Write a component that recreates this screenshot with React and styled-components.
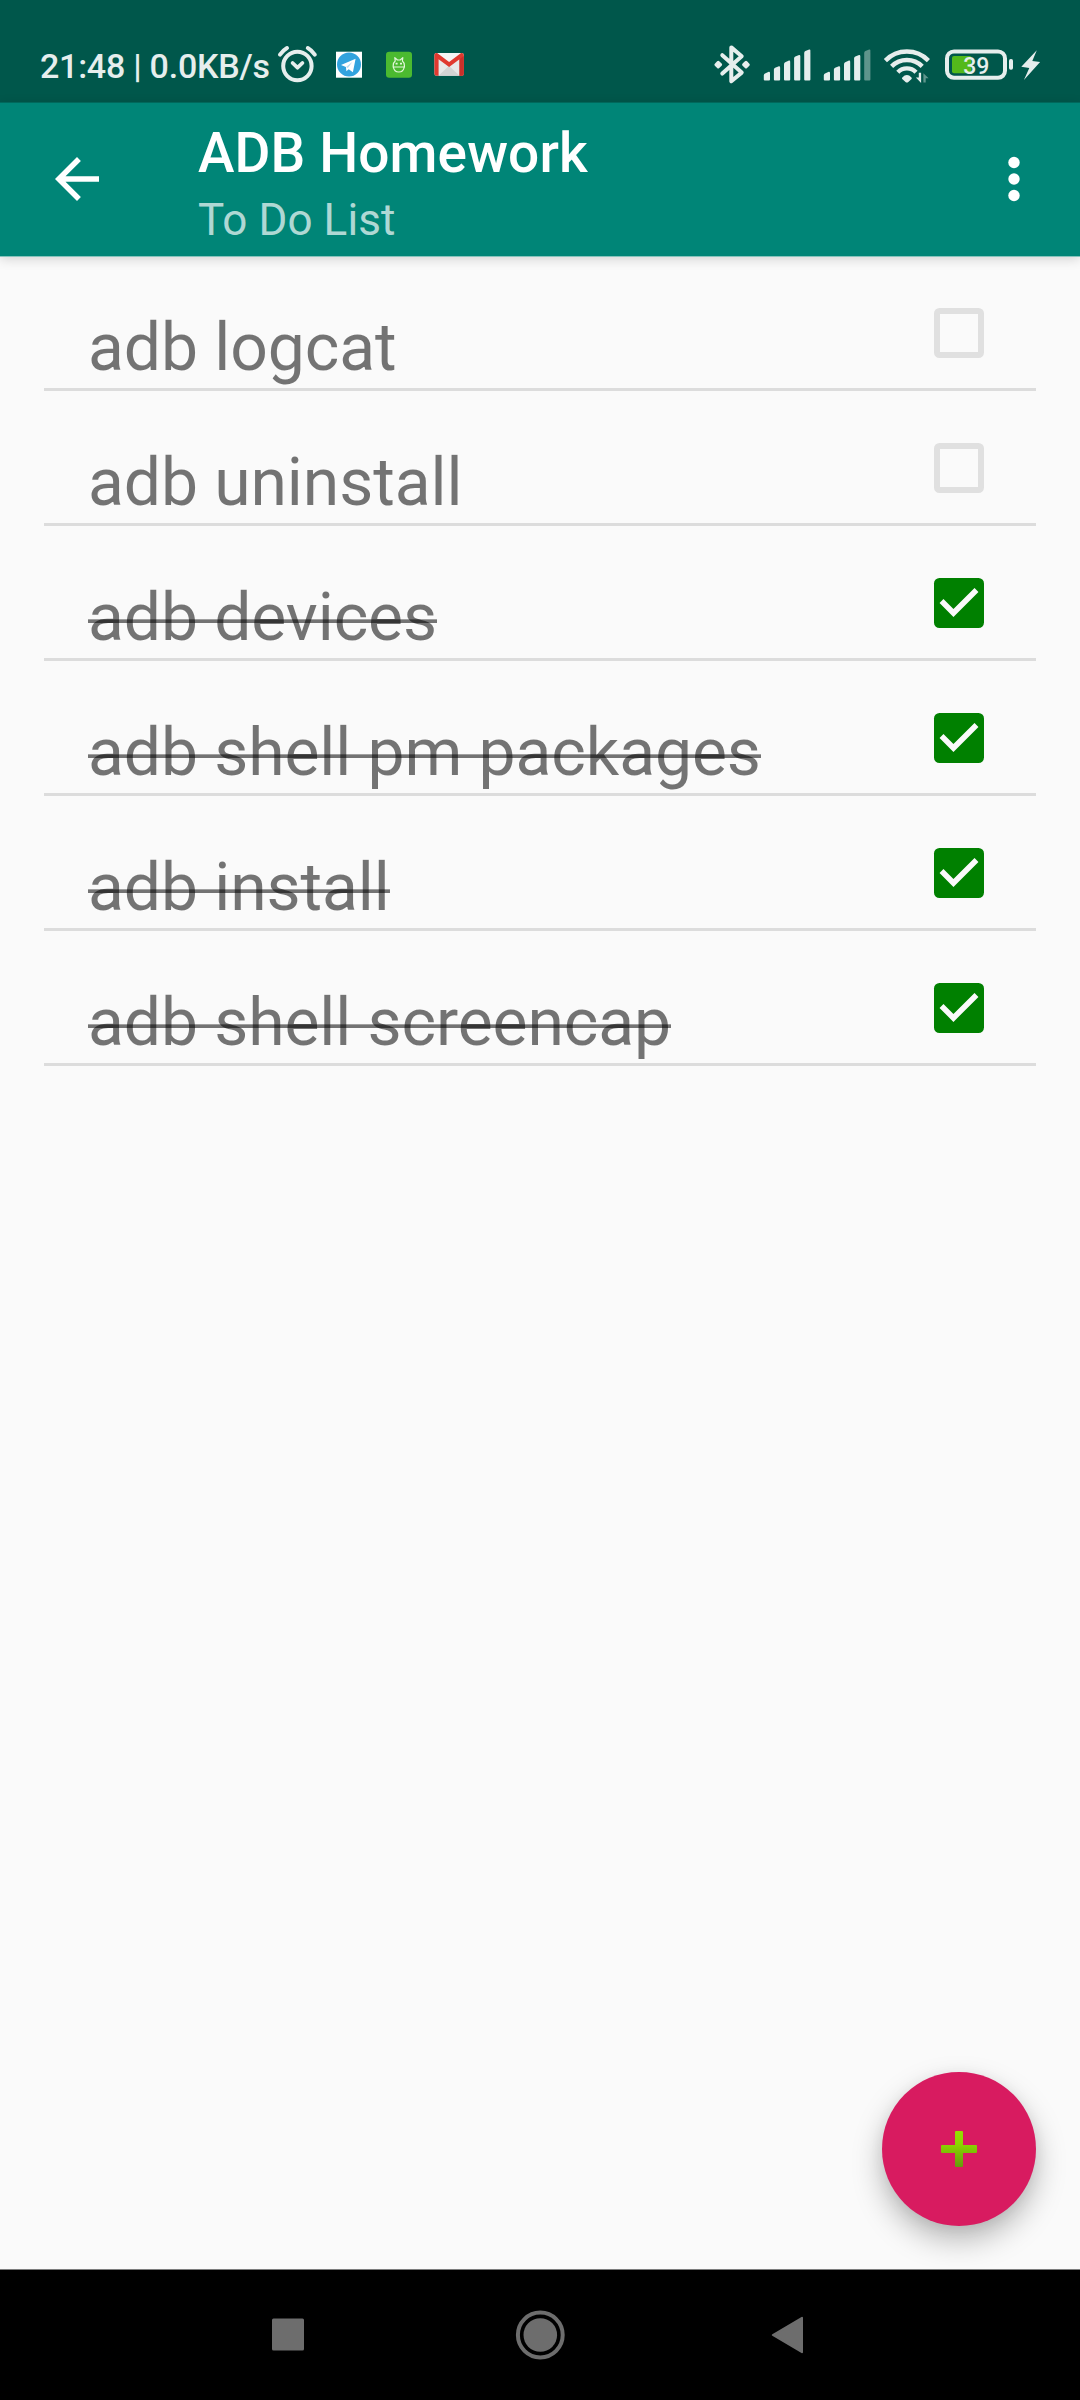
import React from "react";
import styled, { createGlobalStyle, css } from "styled-components";

const ink = "#e6eeed";

const GlobalStyle = createGlobalStyle`
  html, body { margin: 0; padding: 0; background: #fafafa; }
  * { box-sizing: border-box; }
`;

const Screen = styled.div`
  width: 1080px;
  height: 2400px;
  display: flex;
  flex-direction: column;
  overflow: hidden;
  background: #fafafa;
  font-family: Roboto, "Liberation Sans", sans-serif;
`;

const StatusBar = styled.div`
  height: 102px;
  flex: none;
  display: flex;
  justify-content: space-between;
  background: #00574b;
`;

const StatusGroup = styled.div`
  display: flex;
`;

const StatusText = styled.span`
  width: 234px;
  padding: 46px 0 0 40px;
  box-sizing: content-box;
  font-size: 34px;
  line-height: 40px;
  font-weight: 500;
  letter-spacing: -0.25px;
  white-space: nowrap;
  color: ${ink};
`;

const IconSvg = styled.svg`
  display: block;
  flex: none;
`;

const BatteryLevel = styled.text`
  font-family: Roboto, sans-serif;
  font-size: 23px;
  font-weight: 500;
  fill: ${ink};
`;

const AppBar = styled.header`
  height: 154px;
  flex: none;
  display: flex;
  align-items: flex-start;
  background: #008577;
  border-top: 1px solid #00685c;
  box-shadow: 0 1px 0 #86c4bd, 0 3px 11px rgba(0, 0, 0, 0.16);
  z-index: 1;
`;

const BarButton = styled.button`
  width: 66px;
  height: 66px;
  margin: 43.4px ${(p) => (p.$end ? 33 : 88)}px 0 ${(p) => (p.$end ? 0 : 44)}px;
  padding: 0;
  border: 0;
  background: none;
`;

const Titles = styled.div`
  flex: 1;
  padding-top: 18px;
`;

const Title = styled.h1`
  margin: 0;
  font-size: 55px;
  line-height: 64px;
  font-weight: 500;
  letter-spacing: 0.1px;
  color: #fff;
`;

const Subtitle = styled.p`
  margin: 9px 0 0;
  font-size: 44px;
  line-height: 52px;
  letter-spacing: 0.1px;
  color: rgba(255, 255, 255, 0.7);
`;

const Main = styled.main`
  flex: 1;
  position: relative;
`;

const List = styled.ul`
  margin: 0;
  padding: 0 44px;
  list-style: none;
`;

const Row = styled.li`
  height: 135px;
  padding: 52.3px 52px 0 44px;
  display: flex;
  justify-content: space-between;
  align-items: flex-start;
  border-bottom: 3px solid #dcdcdc;
`;

const Label = styled.span`
  position: relative;
  margin-top: 0.7px;
  font-size: 66px;
  line-height: 78px;
  letter-spacing: -0.09px;
  color: rgba(0, 0, 0, 0.54);
  white-space: nowrap;
  ${(p) =>
    p.$done &&
    css`
      &::after {
        content: "";
        position: absolute;
        left: 0;
        right: 0;
        top: 40px;
        height: 4px;
        background: linear-gradient(rgba(0, 0, 0, 0.36) 1px, rgba(0, 0, 0, 0.54) 1px);
      }
    `}
`;

const Check = styled.span`
  width: 50px;
  height: 50px;
  flex: none;
  border-radius: 5.5px;
  ${(p) => (p.$on ? "background: #008000;" : "border: 6px solid #e0e0e0;")}
`;

const Fab = styled.button`
  position: absolute;
  right: 44px;
  bottom: 43.5px;
  width: 154px;
  height: 154px;
  padding: 0;
  border: 0;
  border-radius: 50%;
  display: flex;
  align-items: center;
  justify-content: center;
  background: #d81b60;
  box-shadow: 0 14px 30px rgba(0, 0, 0, 0.27), 0 3px 14px rgba(0, 0, 0, 0.06);
`;

const NavBar = styled.nav`
  height: 131px;
  flex: none;
  display: flex;
  justify-content: space-between;
  align-items: center;
  padding: 0 263px 0 263px;
  border-top: 1px solid #7d7d7d;
  background: #000;
`;

const NavButton = styled.button`
  width: 50px;
  height: 50px;
  padding: 0;
  border: 0;
  background: none;
`;

const StatusIcon = ({ x, w, children }) => (
  <IconSvg width={w} height="102" viewBox={`${x} 0 ${w} 102`} fill="none">
    {children}
  </IconSvg>
);

const Alarm = () => (
  <StatusIcon x={274} w={50}>
    <g stroke={ink} strokeLinecap="round" strokeWidth="4">
      <circle cx="297.4" cy="66" r="14.2" />
      <path d="M280 54.6Q283.2 50.2 287 48M307.8 48Q311.6 50.2 314.8 54.6" />
      <path d="M292.6 63l4.9 4.7 4.9-4.7" strokeWidth="3.8" strokeLinejoin="round" />
    </g>
  </StatusIcon>
);

const Telegram = () => (
  <StatusIcon x={324} w={50}>
    <rect x="336" y="51.7" width="26" height="26" fill="#fff" />
    <circle cx="349" cy="64.5" r="12" fill="#32a3de" />
    <path d="M341 65l14.6-6.2-2.7 13.4-4.2-2.9-2.3 2-.5-4.3z" fill="#fff" />
    <path d="M346 67l6.5-5.2-4.6 6.2z" fill="#b9dcf0" />
  </StatusIcon>
);

const Robot = () => (
  <StatusIcon x={374} w={50}>
    <rect x="386" y="51.7" width="26" height="26" rx="3.2" fill="#4bba30" />
    <g stroke="#e4f8dc" strokeWidth="1.2" strokeLinejoin="round">
      <path d="M393.2 67v-1.4c0-2.2.8-3.6 2-4.6l-.4-3.4 2.6 2.4h2.8l2.6-2.4-.4 3.4c1.2 1 2 2.4 2 4.6V67z" />
      <path d="M393.4 67c.4 3 2.600 5 5.400 5s5-2 5.400-5" />
    </g>
    <path d="M395.600 62.800h2v1.700h-2zM400 62.800h2v1.700h-2z" fill="#e4f8dc" />
  </StatusIcon>
);

const Mail = () => (
  <StatusIcon x={424} w={50}>
    <rect x="434.4" y="53" width="29.4" height="22.8" rx="2" fill="#e8e8e8" />
    <path d="M438.5 75.8l10.5-10 10.5 10z" fill="#d4d4d4" />
    <path d="M436 53h26l-13 10.4z" fill="#f5f5f5" />
    <path d="M434.4 55v18.8a2 2 0 0 0 2 2h2.2V59.3l10.5 7.6 10.4-7.6v16.5h2.3a2 2 0 0 0 2-2V55c0-1.6-2-2.6-3.4-1.5L449.1 62l-11.3-8.5c-1.4-1.1-3.4-.1-3.4 1.5z" fill="#e0392f" />
    <path d="M459.5 59.3l4.3-3.2v17.7a2 2 0 0 1-2 2h-2.3z" fill="#c9302a" />
  </StatusIcon>
);

const Bluetooth = () => (
  <StatusIcon x={710} w={45}>
    <path
      d="M722.3 55.2l19.4 17.4-10.4 8.6V47.4l10.4 8.8-19.4 17.4"
      stroke={ink}
      strokeWidth="4"
      strokeLinecap="round"
      strokeLinejoin="round"
    />
    <path
      d="M718.2 62.4l2.4 2.3-2.4 2.3-2.3-2.3zM746 62.4l2.3 2.3L746 67l-2.4-2.3z"
      fill={ink}
      stroke={ink}
      strokeWidth="3"
      strokeLinejoin="round"
    />
  </StatusIcon>
);

const Signal = ({ x, w, level }) => (
  <StatusIcon x={x} w={w}>
    {[0, 1, 2, 3, 4].map((i) => {
      const left = x + 8.8 + i * 10.1;
      const top = 72 - i * 5.6;
      return (
        <path
          key={i}
          d={`M${left} ${top + 3.4}Q${left} ${top + 2} ${left + 1.2} ${top + 1.4}L${left + 5} ${top - 0.2}Q${left + 6.2} ${top - 0.4} ${left + 6.2} ${top + 1}V79.4Q${left + 6.2} 80.4 ${left + 5.2} 80.4H${left + 1}Q${left} 80.4 ${left} 79.4z`}
          fill={i < level ? ink : "#5f958c"}
        />
      );
    })}
  </StatusIcon>
);

const Wifi = () => (
  <StatusIcon x={876} w={60}>
    <g stroke={ink} strokeWidth="4.4">
      <path d="M885.4 60.600a30 30 0 0 1 43 0" />
      <path d="M891.6 66.4a21.5 21.5 0 0 1 30.6 0" />
      <path d="M897.8 72.2a12.8 12.8 0 0 1 18.2 0" />
    </g>
    <path d="M902.3 77.4q4.6-4.6 9.2 0q.8 1-.2 1.9l-3 2.8q-1.4 1-2.8 0l-3-2.8q-1-.9-.2-1.9z" fill={ink} />
    <path d="M918.8 72.8h2.3v10.2l-5.2-5.4h2.9z" fill={ink} />
    <path d="M923.4 82.4V73.2l5.2 5h-2.9v4.2z" fill="#5f958c" />
  </StatusIcon>
);

const Battery = () => (
  <StatusIcon x={936} w={144}>
    <rect x="947" y="51.4" width="58" height="26.4" rx="7" stroke={ink} strokeWidth="4" />
    <rect x="952" y="56" width="19.5" height="17.2" rx="2" fill="#53b91b" />
    <rect x="1009" y="59" width="4" height="10.8" rx="1.8" fill={ink} />
    <BatteryLevel x="963.2" y="73.6">39</BatteryLevel>
    <path d="M1036.8 50.2L1021.3 66.8l8 1.2-5.4 12 16.2-18-7.8-1z" fill={ink} />
  </StatusIcon>
);

const BackArrow = () => (
  <IconSvg width="66" height="66" viewBox="0 0 24 24" fill="#fff">
    <path d="M20 11H7.83l5.59-5.59L12 4l-8 8 8 8 1.41-1.41L7.83 13H20z" />
  </IconSvg>
);

const MoreDots = () => (
  <IconSvg width="66" height="66" viewBox="0 0 66 66" fill="#fff">
    <circle cx="33" cy="16.500" r="5.7" />
    <circle cx="33" cy="33" r="5.7" />
    <circle cx="33" cy="49.500" r="5.7" />
  </IconSvg>
);

const Tick = () => (
  <IconSvg width="50" height="50" viewBox="0 0 18 18" fill="#fafafa">
    <path d="M7 14L2 9l1.41-1.41L7 11.17l7.59-7.59L16 5z" />
  </IconSvg>
);

const Plus = () => (
  <IconSvg width="40" height="40" viewBox="0 0 40 40">
    <defs>
      <linearGradient id="plusFill" x1="0" y1="0" x2="0" y2="1">
        <stop offset="0" stopColor="#94e000" />
        <stop offset="0.35" stopColor="#8cd600" />
        <stop offset="1" stopColor="#659a0c" />
      </linearGradient>
    </defs>
    <path
      d="M17 2h6q1 0 1 1v13h13q1 0 1 1v6q0 1-1 1H24v13q0 1-1 1h-6q-1 0-1-1V24H3q-1 0-1-1v-6q0-1 1-1h13V3q0-1 1-1z"
      fill="url(#plusFill)"
    />
  </IconSvg>
);

const tasks = [
  { label: "adb logcat", done: false },
  { label: "adb uninstall", done: false },
  { label: "adb devices", done: true },
  { label: "adb shell pm packages", done: true },
  { label: "adb install", done: true },
  { label: "adb shell screencap", done: true },
];

export default function App() {
  return (
    <Screen>
      <GlobalStyle />
      <StatusBar>
        <StatusGroup>
          <StatusText>21:48 | 0.0KB/s</StatusText>
          <Alarm />
          <Telegram />
          <Robot />
          <Mail />
        </StatusGroup>
        <StatusGroup>
          <Bluetooth />
          <Signal x={755} w={60} level={5} />
          <Signal x={815} w={61} level={4} />
          <Wifi />
          <Battery />
        </StatusGroup>
      </StatusBar>
      <AppBar>
        <BarButton aria-label="Back">
          <BackArrow />
        </BarButton>
        <Titles>
          <Title>ADB Homework</Title>
          <Subtitle>To Do List</Subtitle>
        </Titles>
        <BarButton $end aria-label="More options">
          <MoreDots />
        </BarButton>
      </AppBar>
      <Main>
        <List>
          {tasks.map((task) => (
            <Row key={task.label}>
              <Label $done={task.done}>{task.label}</Label>
              <Check $on={task.done}>{task.done && <Tick />}</Check>
            </Row>
          ))}
        </List>
        <Fab aria-label="Add">
          <Plus />
        </Fab>
      </Main>
      <NavBar>
        <NavButton aria-label="Recents">
          <IconSvg width="50" height="50" viewBox="0 0 50 50">
            <rect x="9" y="8.6" width="32" height="32" rx="1.5" fill="#6d6d6d" />
          </IconSvg>
        </NavButton>
        <NavButton aria-label="Home">
          <IconSvg width="50" height="50" viewBox="0 0 50 50">
            <circle cx="25.3" cy="25" r="22.4" fill="none" stroke="#6d6d6d" strokeWidth="4" />
            <circle cx="25.3" cy="25" r="16.8" fill="#6d6d6d" />
          </IconSvg>
        </NavButton>
        <NavButton aria-label="Back">
          <IconSvg width="50" height="50" viewBox="0 0 50 50">
            <path
              d="M5.8 25L35 7.8v34.4z"
              fill="#6d6d6d"
              stroke="#6d6d6d"
              strokeWidth="2"
              strokeLinejoin="round"
            />
          </IconSvg>
        </NavButton>
      </NavBar>
    </Screen>
  );
}
